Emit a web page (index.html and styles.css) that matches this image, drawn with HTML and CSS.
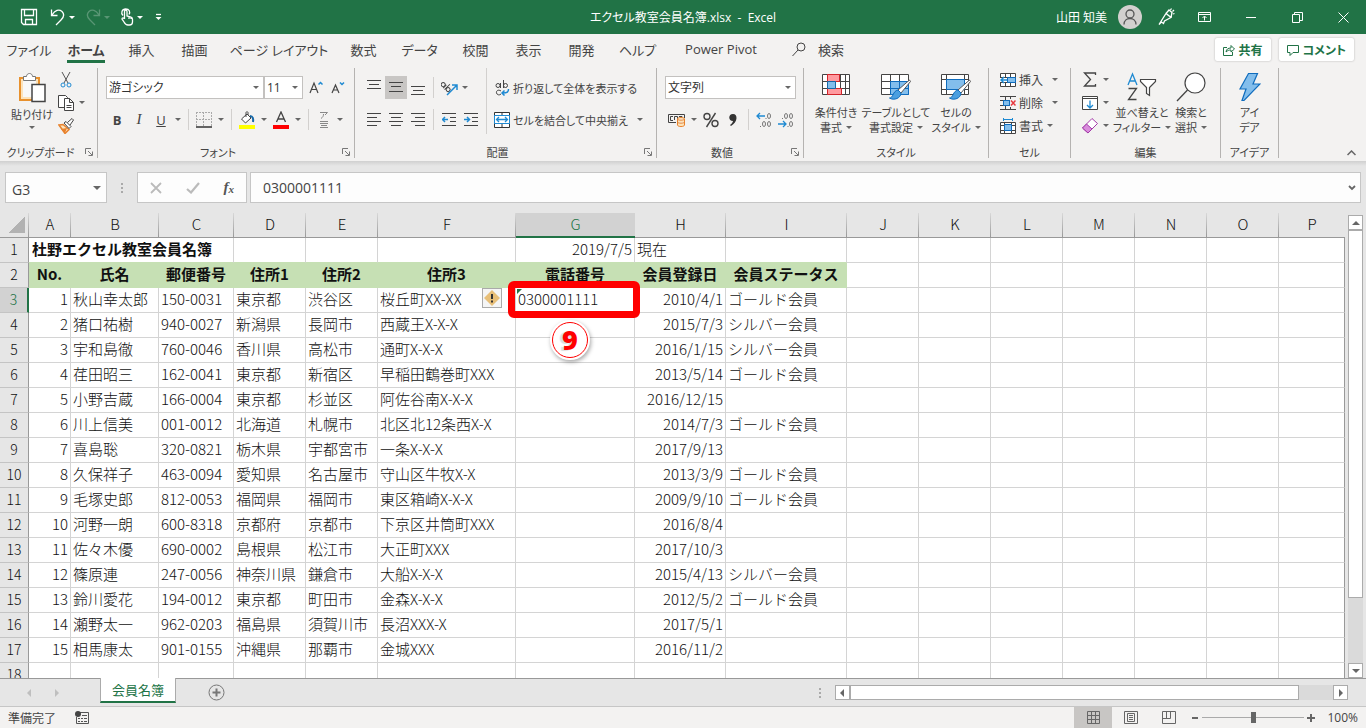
FILE: index.html
```html
<!DOCTYPE html>
<html lang="ja">
<head>
    <meta charset="UTF-8">
    <meta name="viewport" content="width=device-width, initial-scale=1.0">
    <title>エクセル教室会員名簿.xlsx - Excel</title>
    <link rel="stylesheet" href="styles.css">
</head>
<body>
    <header class="titlebar">
        <div class="quick-access">
            <button class="qa-btn" aria-label="上書き保存"><svg width="18" height="18" viewBox="0 0 18 18"><path d="M1.5 1.5h15v15h-13l-2-2zM4.500 1.500v6h9v-6M5.500 16.500v-5h7v5"/></svg></button>
            <button class="qa-btn qa-undo" aria-label="元に戻す"><svg width="16" height="18" viewBox="0 0 16 18"><path d="M1.500 1.500v6h6M2 7C5 2 9 1 12 3.500c3 3 1.500 6-1 8.500L6 17"/></svg><i class="caret"></i></button>
            <button class="qa-btn qa-redo" aria-label="やり直し"><svg width="16" height="18" viewBox="0 0 16 18"><path d="M14.500 1.500v6h-6M14 7C11 2 7 1 4 3.500c-3 3-1.500 6 1 8.500l5 5"/></svg><i class="caret"></i></button>
            <button class="qa-btn qa-touch" aria-label="タッチ/マウス モード"><svg width="14" height="18" viewBox="0 0 14 18"><path d="M4.500 11V3.500c0-2 2.500-2 2.500 0V8l4 1c1.500.5 1.500 1 1.500 2.500V14c0 2-1 3-3 3H8c-2 0-3-1-4-3l-2-3c0-1.500 1.500-1.500 2.500 0M9 8.500V11M11 9v2M3 7.500C.5 5 2 1 5.700 1S10.500 4 9 6.500"/></svg><i class="caret"></i></button>
            <button class="qa-btn" aria-label="クイック アクセス ツール バーのユーザー設定"><svg width="7" height="8" viewBox="0 0 7 8"><path d="M1 1.500h5"/><path class="solid" d="M.5 4h6l-3 3z"/></svg></button>
        </div>
        <div class="doc-title">エクセル教室会員名簿.xlsx&nbsp; -&nbsp; Excel</div>
        <div class="window-tools">
            <span class="user-name">山田 知美</span>
            <span class="avatar"><svg width="24" height="24" viewBox="0 0 24 24"><circle cx="12" cy="9" r="4"/><path d="M6 19.500c0-8 12-8 12 0"/></svg></span>
            <button class="pen-btn" aria-label="近日公開の機能"><svg width="17" height="18" viewBox="0 0 17 18"><path d="M1 16.500L8 5.500l5 4L6.500 13l-1 2.500L3.500 14zM8 5.500l3-3.500 3 2.500-1 5M12.500 2L13.500.5M14.500 3.500L16 2M15 6l1.500-.5"/></svg></button>
            <button class="win-btn" aria-label="リボンの表示オプション"><svg width="14" height="12" viewBox="0 0 14 12"><path d="M.5 1.500h12v9H.5zM.5 3.500h12M6.500 9.500v-4M4.500 7l2-2 2 2"/></svg></button>
            <button class="win-btn" aria-label="最小化"><svg width="11" height="11" viewBox="0 0 11 11"><path d="M0 5.500h10"/></svg></button>
            <button class="win-btn" aria-label="元に戻す (縮小)"><svg width="11" height="11" viewBox="0 0 11 11"><path d="M.5 2.500h7v8h-7zM2.500 2.500v-2h8v8h-3"/></svg></button>
            <button class="win-btn" aria-label="閉じる"><svg width="11" height="11" viewBox="0 0 11 11"><path d="M.5.5l10 10M10.500.5l-10 10"/></svg></button>
        </div>
    </header>

    <nav class="tabs">
        <button class="tab tab-file">ファイル</button>
        <button class="tab tab-home active"><span>ホーム</span></button>
        <button class="tab">挿入</button>
        <button class="tab">描画</button>
        <button class="tab tab-layout">ページ レイアウト</button>
        <button class="tab">数式</button>
        <button class="tab tab-kana">データ</button>
        <button class="tab">校閲</button>
        <button class="tab">表示</button>
        <button class="tab">開発</button>
        <button class="tab tab-kana">ヘルプ</button>
        <button class="tab tab-pivot">Power Pivot</button>
        <button class="tab tab-search"><svg width="14" height="15" viewBox="0 0 14 15"><circle cx="9" cy="5" r="4"/><path d="M6 8l-5.500 6"/></svg>検索</button>
        <div class="tab-actions">
            <button class="action-btn"><svg width="12" height="12" viewBox="0 0 12 12"><path d="M4 3.500H.5v8h9V8M3 8c.5-3 2-4 5-4V1.500L11.500 5 8 8V6C6 6 4.500 6.500 3 8z"/></svg>共有</button>
            <button class="action-btn"><svg width="12" height="12" viewBox="0 0 12 12"><path d="M.5 1.500h11v7H6l-3 3v-3H.5z"/></svg>コメント</button>
        </div>
    </nav>

    <section class="ribbon">
        <div class="group g-clip">
            <div class="group-body">
                <button class="big-btn paste-btn">
                    <svg width="28" height="32" viewBox="0 0 28 32"><path fill="#fce3bb" stroke="#e8912d" stroke-width="2" d="M2 6h19v22H2z"/><path fill="#f8f8f8" d="M5 9h13v16H5z"/><path fill="#fff" stroke="#777" d="M5.500 8.500v-4h3c0-4 6-4 6 0h3v4z"/><path fill="#fff" stroke="#444" stroke-width="1.500" d="M14 12.500h13v17H14z"/></svg>
                    <span>貼り付け</span><i class="caret"></i>
                </button>
                <div class="stack">
                    <button class="row-btn" aria-label="切り取り"><svg width="16" height="16" viewBox="0 0 16 16"><path stroke="#555" d="M4 0l6 11M12 0L6 11"/><circle cx="5" cy="13" r="2" stroke="#1f8ad2"/><circle cx="11" cy="13" r="2" stroke="#1f8ad2"/></svg></button>
                    <button class="row-btn" aria-label="コピー"><svg width="16" height="16" viewBox="0 0 16 16"><path fill="#fff" stroke="#444" d="M.5.500h7l2 2v10h-9z"/><path fill="#fff" stroke="#444" d="M6.500 3.500h5l4 4v8h-9zM11.500 3.500v4h4M8.500 10.500h5M8.500 12.500h5"/></svg><i class="caret"></i></button>
                    <button class="row-btn" aria-label="書式のコピー/貼り付け"><svg width="16" height="16" viewBox="0 0 16 16"><path fill="#fce3bb" stroke="#e8822d" stroke-width="1.500" d="M1 7l4-.500 6 5-4 4z"/><path fill="#e8822d" d="M3 11l6-1-2 5z"/><path fill="#fff" stroke="#444" d="M6 5l2-1.500 5 5L11 10.500zM9.500 4.500L14 .5 15.500 2 12 7"/></svg></button>
                </div>
            </div>
            <div class="group-label"><span>クリップボード</span><button class="launcher" aria-label="クリップボードの詳細"><svg width="8" height="8" viewBox="0 0 8 8"><path d="M.5 6V.5H6M3 3l4 4M7.500 3.500v4h-4"/></svg></button></div>
        </div>

        <div class="group g-font">
            <div class="group-body lines">
                <div class="line">
                    <span class="select-wrap font-name"><select aria-label="フォント"><option>游ゴシック</option></select></span>
                    <span class="select-wrap font-size"><select aria-label="フォント サイズ"><option>11</option></select></span>
                    <button class="icon-btn" aria-label="フォント サイズの拡大"><svg width="15" height="14" viewBox="0 0 15 14"><path stroke="#444" stroke-width="1.200" d="M1 12L5 2l4 10M2.500 8.500h5"/><path stroke="#1f8ad2" stroke-width="1.500" d="M9.500 3.500l2-2 2 2"/></svg></button>
                    <button class="icon-btn" aria-label="フォント サイズの縮小"><svg width="15" height="14" viewBox="0 0 15 14"><path stroke="#444" stroke-width="1.200" d="M1 12l3.500-8L8 12M2.300 9h4.500"/><path stroke="#1f8ad2" stroke-width="1.500" d="M9 1.500l2 2 2-2"/></svg></button>
                </div>
                <div class="line">
                    <button class="icon-btn letter bold">B</button>
                    <button class="icon-btn letter italic">I</button>
                    <button class="icon-btn letter underline">U</button>
                    <i class="caret"></i>
                    <i class="sep"></i>
                    <button class="menu-btn" aria-label="罫線"><svg width="16" height="16" viewBox="0 0 16 16"><path stroke="#aaa" stroke-dasharray="2 1" d="M.5 0v14M15.500 0v14M0 .5h16M0 7.500h16M7.500 0v14"/><path stroke="#333" stroke-width="1.500" d="M0 15h16"/></svg><i class="caret"></i></button>
                    <i class="sep"></i>
                    <button class="menu-btn" aria-label="塗りつぶしの色"><svg width="16" height="18" viewBox="0 0 16 18"><path fill="#fff" stroke="#444" d="M2.500 8L8 3l4 4-5.500 5zM7 6V1.500c0-1 2-1 2 0V4"/><path stroke="#1668a8" stroke-width="2" d="M11 5c3 0 3.500 3 3 6"/><path fill="#ff0" d="M0 14h16v4H0z"/></svg><i class="caret"></i></button>
                    <button class="menu-btn" aria-label="フォントの色"><svg width="16" height="18" viewBox="0 0 16 18"><path stroke="#444" stroke-width="1.300" d="M3.500 11L8 1l4.500 10M5 8h6"/><path fill="#f00" d="M0 14h16v4H0z"/></svg><i class="caret"></i></button>
                    <i class="sep"></i>
                    <button class="menu-btn phonetic" aria-label="ふりがなの表示/非表示"><svg width="10" height="17" viewBox="0 0 10 17"><path stroke="#888" d="M1 1.500h7.500L6 4M4.500 3c0 2-.5 3-2.500 4.500M1 10.500h8M1 12.500h8M2 14.500h6M1 16.500h8"/></svg><i class="caret"></i></button>
                </div>
            </div>
            <div class="group-label"><span>フォント</span><button class="launcher" aria-label="フォントの設定"><svg width="8" height="8" viewBox="0 0 8 8"><path d="M.5 6V.5H6M3 3l4 4M7.500 3.500v4h-4"/></svg></button></div>
        </div>

        <div class="group g-align">
            <div class="group-body">
                <div class="lines">
                    <div class="line">
                        <button class="align-btn" aria-label="上揃え"><svg width="14" height="15" viewBox="0 0 14 15"><path d="M0 .500h14M2 4.500h10M0 8.500h14"/></svg></button>
                        <button class="align-btn pressed" aria-label="上下中央揃え"><svg width="14" height="15" viewBox="0 0 14 15"><path d="M0 2.500h14M2 6.500h10M0 11.500h14"/></svg></button>
                        <button class="align-btn" aria-label="下揃え"><svg width="14" height="15" viewBox="0 0 14 15"><path d="M0 6.500h14M2 10.500h10M0 14.500h14"/></svg></button>
                        <i class="sep"></i>
                        <button class="menu-btn" aria-label="方向"><svg width="17" height="16" viewBox="0 0 17 16"><g stroke="#444" transform="rotate(45 5 6)"><circle cx="2" cy="7" r="2"/><path d="M4.500 5v4.500M6.500 2v7.500"/><circle cx="9" cy="7" r="2"/></g><path stroke="#1f8ad2" stroke-width="1.500" d="M6 15L15.500 5.500M11 5h5v5"/></svg><i class="caret"></i></button>
                    </div>
                    <div class="line">
                        <button class="align-btn" aria-label="左揃え"><svg width="14" height="14" viewBox="0 0 14 14"><path d="M0 .5h14M0 4.500h10M0 8.500h14M0 12.500h10"/></svg></button>
                        <button class="align-btn" aria-label="中央揃え"><svg width="14" height="14" viewBox="0 0 14 14"><path d="M0 .5h14M2 4.500h10M0 8.500h14M2 12.500h10"/></svg></button>
                        <button class="align-btn" aria-label="右揃え"><svg width="14" height="14" viewBox="0 0 14 14"><path d="M0 .5h14M4 4.500h10M0 8.500h14M4 12.500h10"/></svg></button>
                        <i class="sep"></i>
                        <button class="align-btn" aria-label="インデントを減らす"><svg width="14" height="14" viewBox="0 0 14 14"><path d="M0 .5h14M8 4.500h6M8 8.500h6M0 12.500h14"/><path class="blue" d="M0 6.500h6M3 4L.500 6.500 3 9"/></svg></button>
                        <button class="align-btn" aria-label="インデントを増やす"><svg width="14" height="14" viewBox="0 0 14 14"><path d="M0 .5h14M8 4.500h6M8 8.500h6M0 12.500h14"/><path class="blue" d="M0 6.500h6M3 4l2.500 2.500L3 9"/></svg></button>
                    </div>
                </div>
                <div class="lines wrap-lines">
                    <button class="line text-btn"><svg width="16" height="16" viewBox="0 0 16 16"><g stroke="#444"><circle cx="4" cy="5.500" r="2"/><path d="M6.500 3v5M9.500 0v8M7 11c-3-2-5 0-4.500 2S5.500 15.500 7 14"/><circle cx="11.500" cy="5.500" r="2"/></g><path stroke="#1f8ad2" stroke-width="1.500" d="M14.500 9c0 3-1 4-6 4M10.500 10.500L8 13l2.500 2.500"/></svg><span>折り返して全体を表示する</span></button>
                    <button class="line text-btn"><svg width="16" height="16" viewBox="0 0 16 16"><path fill="#fff" stroke="#333" d="M.5.500h15v15H.5zM8 0v4M8 12v4"/><path fill="#fff" stroke="#1f8ad2" d="M.500 3.500h15v8H.5z"/><path stroke="#1f8ad2" stroke-width="1.300" d="M3 7.500h10M5 5L2.500 7.500 5 10M11 5l2.500 2.500L11 10"/></svg><span>セルを結合して中央揃え</span><i class="caret"></i></button>
                </div>
            </div>
            <div class="group-label"><span>配置</span><button class="launcher" aria-label="配置の設定"><svg width="8" height="8" viewBox="0 0 8 8"><path d="M.5 6V.5H6M3 3l4 4M7.500 3.500v4h-4"/></svg></button></div>
        </div>

        <div class="group g-number">
            <div class="group-body lines">
                <div class="line">
                    <span class="select-wrap number-format"><select aria-label="数値の書式"><option>文字列</option></select></span>
                </div>
                <div class="line">
                    <button class="menu-btn currency" aria-label="通貨表示形式"><svg width="17" height="14" viewBox="0 0 17 14"><path stroke="#444" d="M16.500 5V1.500H.5v8H8M5 3.500H2.500v4H5M6.500 7V3.500h3v3M11 3.500h3v1"/><path fill="#fce3bb" stroke="#e8822d" d="M9.500 6c0-2 7-2 7 0v6c0 2-7 2-7 0zM9.500 6c0 1.500 7 1.500 7 0M9.500 9c0 1.500 7 1.500 7 0"/></svg><i class="caret"></i></button>
                    <button class="icon-btn" aria-label="パーセント スタイル"><svg width="16" height="16" viewBox="0 0 16 16"><g stroke="#444" stroke-width="1.400"><circle cx="4" cy="4.500" r="3"/><circle cx="12" cy="11.500" r="3"/><path d="M12.500 1L3.500 15"/></g></svg></button>
                    <button class="icon-btn" aria-label="桁区切りスタイル"><svg width="10" height="14" viewBox="0 0 10 14"><path fill="#333" d="M5 1c5 0 5 8-2 12l-1-1c2-1.500 3-3 3-4C0 8 0 1 5 1z"/></svg></button>
                    <i class="sep"></i>
                    <button class="icon-btn decimal" aria-label="小数点以下の表示桁数を増やす"><svg width="16" height="16" viewBox="0 0 16 16"><g stroke="#777"><ellipse cx="13" cy="4" rx="1.500" ry="2.500"/><ellipse cx="8" cy="12" rx="1.500" ry="2.500"/><ellipse cx="13" cy="12" rx="1.500" ry="2.500"/><path d="M9.500 6.500h1M4 14.500h1"/></g><path stroke="#1f8ad2" stroke-width="1.300" d="M1 4h8M4 1L1 4l3 3"/></svg></button>
                    <button class="icon-btn decimal" aria-label="小数点以下の表示桁数を減らす"><svg width="16" height="16" viewBox="0 0 16 16"><g stroke="#777"><ellipse cx="8" cy="4" rx="1.500" ry="2.500"/><ellipse cx="13" cy="4" rx="1.500" ry="2.500"/><ellipse cx="13" cy="12" rx="1.500" ry="2.500"/><path d="M4 6.500h1M9.500 14.500h1"/></g><path stroke="#1f8ad2" stroke-width="1.300" d="M0 12h8M5 9l3 3-3 3"/></svg></button>
                </div>
            </div>
            <div class="group-label"><span>数値</span><button class="launcher" aria-label="表示形式の設定"><svg width="8" height="8" viewBox="0 0 8 8"><path d="M.5 6V.5H6M3 3l4 4M7.500 3.500v4h-4"/></svg></button></div>
        </div>

        <div class="group g-style">
            <div class="group-body">
                <button class="big-btn"><svg width="30" height="28" viewBox="0 0 30 28"><path fill="#fff" stroke="#444" d="M1.500 2.500h27v20h-27zM1 9.500h28M1 16.500h28M6.500 2v21M19.500 2v21M24.500 2v21"/><path fill="#ff9a9f" stroke="#d3242b" d="M6.500 2.500h12v7h-12zM6.500 16.500h14v6h-14z"/><path fill="#83beec" stroke="#1668a8" d="M6.500 9.500h8v7h-8z"/></svg><span>条件付き<br>書式<i class="caret"></i></span></button>
                <button class="big-btn"><svg width="30" height="28" viewBox="0 0 30 28"><path fill="#fff" stroke="#444" d="M.5 2.500h27v20H.5zM0 9.500h28M0 16.500h28M9.500 2v21M18.500 2v21"/><path fill="#83beec" stroke="#0f6cbd" d="M9.500 9.500h18v13h-18zM9.500 16.500h18M18.500 9.500v13"/><path fill="#fff" stroke="#555" d="M17 18L28.500 8l1 1.500L20 21z"/><path fill="#4a9fe0" stroke="#0f6cbd" d="M8.500 26c4 0 3-7 8.500-8l3 3c0 5-7 8-11.500 5z"/></svg><span>テーブルとして<br>書式設定<i class="caret"></i></span></button>
                <button class="big-btn"><svg width="30" height="28" viewBox="0 0 30 28"><path fill="#fff" stroke="#444" d="M.5 2.500h27v20H.5zM0 7.500h28M0 17.500h28M5.500 2v21M23.500 2v21"/><path fill="#83beec" stroke="#0f6cbd" d="M5.500 7.500h18v10h-18z"/><path fill="#fff" stroke="#555" d="M17 18L28.500 8l1 1.500L20 21z"/><path fill="#4a9fe0" stroke="#0f6cbd" d="M8.500 26c4 0 3-7 8.500-8l3 3c0 5-7 8-11.500 5z"/></svg><span>セルの<br>スタイル<i class="caret"></i></span></button>
            </div>
            <div class="group-label"><span>スタイル</span></div>
        </div>

        <div class="group g-cells">
            <div class="group-body">
                <div class="stack">
                    <button class="row-btn"><svg width="16" height="14" viewBox="0 0 16 14"><path fill="#fff" stroke="#444" d="M.5.500h15v13H.5zM.5 4.500h15M.5 9.500h15M5.500.5v13M10.500.5v13"/><path fill="#83beec" stroke="#0f6cbd" d="M7.500 4.500h8v5h-8z"/><path fill="#fff" d="M0 5h7v4H0z"/><path stroke="#1f8ad2" stroke-width="1.500" d="M1 7h6M4 4L1 7l3 3"/></svg><span>挿入</span><i class="caret"></i></button>
                    <button class="row-btn"><svg width="16" height="14" viewBox="0 0 16 14"><path fill="#fff" stroke="#444" d="M0 .500h16M5.500.5v4M10.500.5v4M0 4.500h16M0 9.500h16M0 13.500h16M5.500 9.500v4M10.500 9.500v4"/><path fill="#83beec" stroke="#0f6cbd" d="M3.500 4.500h6v5h-6z"/><path fill="#f3f2f1" d="M10 3h6v8h-6z"/><path stroke="#e8383d" stroke-width="1.500" d="M11 4.500l4.500 5M15.500 4.500l-4.500 5"/></svg><span>削除</span><i class="caret"></i></button>
                    <button class="row-btn near"><svg width="16" height="16" viewBox="0 0 16 16"><path fill="#fff" stroke="#444" d="M.5 4.500h15v11H.5zM.5 7.500h15M.5 12.500h15M4.500 4.500v11M11.500 4.500v11"/><path fill="#83beec" stroke="#0f6cbd" d="M4.500 6.500h7v6h-7z"/><path stroke="#1f8ad2" d="M3.500 1.500h9M3.500 0v3M12.500 0v3"/></svg><span>書式</span><i class="caret"></i></button>
                </div>
            </div>
            <div class="group-label"><span>セル</span></div>
        </div>

        <div class="group g-edit">
            <div class="group-body">
                <div class="stack">
                    <button class="row-btn" aria-label="合計"><svg width="16" height="15" viewBox="0 0 16 15"><path stroke="#444" stroke-width="1.300" d="M13.500 3V1H2.500l6 6.500-6 6.500h11v-2"/></svg><i class="caret"></i></button>
                    <button class="row-btn" aria-label="フィル"><svg width="16" height="14" viewBox="0 0 16 14"><path fill="#fff" stroke="#444" d="M.5.500h15v13H.5zM0 2.500h16"/><path stroke="#1f8ad2" stroke-width="1.300" d="M8 4.500V12M5 9l3 3 3-3"/></svg><i class="caret"></i></button>
                    <button class="row-btn" aria-label="クリア"><svg width="16" height="16" viewBox="0 0 16 16"><path fill="#fff" stroke="#a33ba8" d="M.5 10L10 .5l5.500 5L6 15z"/><path fill="#d98cdc" stroke="#a33ba8" d="M.500 10L4.500 6l5.500 5L6 15z"/></svg><i class="caret"></i></button>
                </div>
                <button class="big-btn sort-btn"><svg width="30" height="30" viewBox="0 0 30 30"><path stroke="#1f8ad2" stroke-width="1.300" d="M1 13L5.500 2 10 13M3 9h5"/><path stroke="#444" stroke-width="1.300" d="M1.500 16.500h8l-8 11h8"/><path fill="#fff" stroke="#444" stroke-width="1.200" d="M13.500 7.500h15v2l-6 6v8l-3-2v-6l-6-6z"/></svg><span>並べ替えと<br>フィルター<i class="caret"></i></span></button>
                <button class="big-btn find-btn"><svg width="30" height="30" viewBox="0 0 30 30"><circle fill="#fff" stroke="#444" stroke-width="1.200" cx="19" cy="11" r="10"/><path stroke="#444" stroke-width="1.300" d="M11.500 18L1 29"/></svg><span>検索と<br>選択<i class="caret"></i></span></button>
            </div>
            <div class="group-label"><span>編集</span></div>
        </div>

        <div class="group g-idea">
            <div class="group-body">
                <button class="big-btn"><svg width="22" height="30" viewBox="0 0 22 30"><path fill="#83beec" stroke="#0f6cbd" stroke-width="1.200" d="M9.500 1.500h9L14 12h7L5 28.500h-2L7 17H1z"/></svg><span>アイ<br>デア</span></button>
            </div>
            <div class="group-label"><span>アイデア</span></div>
        </div>
        <button class="collapse-btn" aria-label="リボンを折りたたむ"><svg width="9" height="6" viewBox="0 0 9 6"><path d="M.5 5l4-4 4 4"/></svg></button>
    </section>

    <section class="formula-bar">
        <div class="name-box"><input type="text" value="G3" aria-label="名前ボックス"><i class="caret"></i></div>
        <i class="dots"></i>
        <div class="formula-tools">
            <button aria-label="キャンセル"><svg width="12" height="12" viewBox="0 0 12 12"><path stroke="#bbb" stroke-width="1.800" d="M1 1l10 10M11 1L1 11"/></svg></button>
            <button aria-label="入力"><svg width="14" height="12" viewBox="0 0 14 12"><path stroke="#bbb" stroke-width="2.200" d="M1 7l4 3.500L13 1"/></svg></button>
            <button class="fx" aria-label="関数の挿入">f<sub>x</sub></button>
        </div>
        <div class="formula-input">
            <input type="text" value="0300001111" aria-label="数式バー">
            <svg width="8" height="6" viewBox="0 0 8 6"><path stroke="#666" stroke-width="1.800" d="M1 1l3 3 3-3"/></svg>
        </div>
    </section>

    <main class="sheet">
        <div class="grid-wrap">
            <table class="grid">
                <colgroup>
                    <col class="c-head"><col class="c-a"><col class="c-b"><col class="c-c"><col class="c-std"><col class="c-std"><col class="c-f"><col class="c-g"><col class="c-h"><col class="c-i">
                    <col class="c-std"><col class="c-std"><col class="c-std"><col class="c-std"><col class="c-std"><col class="c-std"><col>
                </colgroup>
                <thead>
                    <tr>
                        <th class="corner"></th><th>A</th><th>B</th><th>C</th><th>D</th><th>E</th><th>F</th><th class="selected">G</th><th>H</th><th>I</th><th>J</th><th>K</th><th>L</th><th>M</th><th>N</th><th>O</th><th>P</th>
                    </tr>
                </thead>
                <tbody id="grid-body">
                    <tr class="title-row">
                        <th>1</th><td colspan="3" class="sheet-title">杜野エクセル教室会員名簿</td><td></td><td></td><td></td><td class="num">2019/7/5</td><td>現在</td><td></td><td></td><td></td><td></td><td></td><td></td><td></td><td></td>
                    </tr>
                    <tr class="head-row">
                        <th>2</th><td>No.</td><td>氏名</td><td>郵便番号</td><td>住所1</td><td>住所2</td><td>住所3</td><td>電話番号</td><td>会員登録日</td><td>会員ステータス</td><td></td><td></td><td></td><td></td><td></td><td></td><td></td>
                    </tr>
                </tbody>
            </table>
        </div>
        <div class="vscroll">
            <button aria-label="上へ"><i class="arrow up"></i></button>
            <div class="vthumb"></div>
            <div class="vtrack"></div>
            <button aria-label="下へ"><i class="arrow down"></i></button>
        </div>
    </main>

    <section class="sheet-tabs">
        <button class="nav-arrow" aria-label="前のシート"><i class="arrow left"></i></button>
        <button class="nav-arrow" aria-label="次のシート"><i class="arrow right"></i></button>
        <button class="sheet-tab">会員名簿</button>
        <button class="add-sheet" aria-label="新しいシート"><svg width="17" height="17" viewBox="0 0 17 17"><circle cx="8.500" cy="8.500" r="7.500"/><path stroke-width="2" d="M8.500 4.500v8M4.500 8.500h8"/></svg></button>
        <i class="dots"></i>
        <div class="hscroll">
            <button aria-label="左へ"><i class="arrow left"></i></button>
            <div class="hthumb"></div>
            <div class="htrack"></div>
            <button aria-label="右へ"><i class="arrow right"></i></button>
        </div>
    </section>

    <footer class="statusbar">
        <span>準備完了</span>
        <button class="macro-btn" aria-label="マクロの記録"><svg width="14" height="13" viewBox="0 0 14 13"><path stroke="#555" d="M5 1.500h8.500v11h-12V6M3 7.500h2M6 7.500h2M9 7.500h3M3 10.500h2M6 10.500h2M9 10.500h3M7 4.500h5"/><circle fill="#444" cx="3" cy="3" r="3"/></svg></button>
        <div class="views">
            <button class="view active" aria-label="標準"><svg width="13" height="13" viewBox="0 0 13 13"><path d="M.5.500h12v12H.5zM4.500.5v12M8.500.5v12M.5 4.500h12M.5 8.500h12"/></svg></button>
            <button class="view" aria-label="ページ レイアウト"><svg width="14" height="13" viewBox="0 0 14 13"><path d="M.500.500h13v12H.5zM3.500 2.500h7v8h-7zM5 4.500h4M5 6.500h4M5 8.500h4"/></svg></button>
            <button class="view" aria-label="改ページ プレビュー"><svg width="14" height="13" viewBox="0 0 14 13"><path d="M.5.500h13v12H.5zM.5 7.500h8V.500M4.500.5v7"/></svg></button>
        </div>
        <button class="zoom-btn" aria-label="縮小"><svg width="7" height="8" viewBox="0 0 7 8"><path stroke-width="2" d="M0 4h6"/></svg></button>
        <input class="zoom-range" type="range" min="0" max="100" value="50" aria-label="ズーム">
        <button class="zoom-btn" aria-label="拡大"><svg width="8" height="8" viewBox="0 0 8 8"><path stroke-width="2" d="M0 4h8M4 0v8"/></svg></button>
        <span class="zoom-value">100%</span>
    </footer>

    <script src="script.js"></script>
</body>
</html>
```

FILE: styles.css
```css
* {
    box-sizing: border-box;
}
body {
    margin: 0;
    height: 100vh;
    display: flex;
    flex-direction: column;
    overflow: hidden;
    background: #e6e6e6;
    color: #444;
    font-family: "Open Sans", "Noto Sans CJK JP", sans-serif;
    font-size: 12px;
    font-feature-settings: "palt";
}
button, input, select {
    font: inherit;
    font-feature-settings: inherit;
    color: inherit;
    border: 0;
    padding: 0;
    margin: 0;
    background: none;
    outline: none;
}
button {
    display: flex;
    align-items: center;
    justify-content: center;
    white-space: nowrap;
}
svg {
    fill: none;
    flex: none;
}
.caret {
    flex: none;
    display: inline-block;
    border: 3px solid transparent;
    border-top-color: #666;
    border-bottom: 0;
}

/* title bar */
.titlebar {
    flex: none;
    height: 34px;
    display: grid;
    grid-template-columns: 1fr auto 1fr;
    align-items: center;
    background: #217346;
    color: #fff;
}
.titlebar svg {
    stroke: #fff;
    stroke-width: 1.3;
}
.titlebar .caret {
    border-top-color: #fff;
}
.titlebar .solid {
    fill: #fff;
    stroke: none;
}
.quick-access {
    display: flex;
    padding-left: 20px;
    gap: 12px;
}
.qa-btn {
    gap: 3px;
    height: 34px;
}
.qa-redo {
    opacity: 0.25;
}
.qa-redo, .qa-touch {
    margin-left: -2px;
}
.window-tools {
    display: flex;
    align-items: center;
    justify-content: flex-end;
}
.avatar {
    width: 24px;
    height: 24px;
    margin: 0 8px 0 11px;
    border-radius: 50%;
    background: #d2d0ce;
}
.avatar svg {
    stroke: #555;
}
.pen-btn {
    width: 32px;
}
.win-btn {
    width: 46px;
    height: 34px;
}
.win-btn svg {
    stroke-width: 1;
}

/* ribbon tabs */
.tabs {
    flex: none;
    height: 31px;
    display: flex;
    padding-left: 1px;
    background: #f3f2f1;
    font-size: 13px;
}
.tab {
    width: 53px;
    height: 30px;
}
.tab-file {
    width: 56px;
}
.tab-home {
    width: 58px;
}
.tab-layout {
    width: 116px;
}
.tab-kana {
    width: 59px;
}
.tab-pivot {
    width: 108px;
}
.tab-search {
    width: 86px;
    gap: 12px;
}
.tab-search svg {
    stroke: #444;
}
.tab.active {
    font-weight: bold;
}
.tab.active span {
    height: 27px;
    line-height: 28px;
    border-bottom: 3px solid #217346;
}
.tab-actions {
    display: flex;
    gap: 8px;
    margin: 4px 12px 0 auto;
}
.action-btn {
    height: 23px;
    padding: 0 8px;
    gap: 4px;
    border-radius: 2px;
    background: #fff;
    box-shadow: 0 0 2px #aaa;
    color: #217346;
    font-size: 12px;
    font-weight: bold;
}
.action-btn svg {
    stroke: #217346;
}

/* ribbon */
.ribbon {
    flex: none;
    height: 96px;
    display: flex;
    background: #f3f2f1;
}
.group {
    flex: none;
    display: flex;
    flex-direction: column;
    margin: 3px 0;
    border-right: 1px solid #b5b3b1;
}
.group-body {
    flex: 1;
    display: flex;
}
.group-label {
    height: 12px;
    line-height: 14px;
    font-size: 11px;
    display: flex;
}
.group-label span {
    flex: 1;
    text-align: center;
}
.launcher {
    width: 16px;
}
.launcher svg {
    stroke: #777;
}
.g-clip {
    width: 98px;
}
.g-font {
    width: 257px;
}
.g-align {
    width: 302px;
}
.g-number {
    width: 147px;
}
.g-style {
    width: 185px;
}
.g-cells {
    width: 82px;
}
.g-edit {
    width: 150px;
}
.g-idea {
    width: 58px;
}
.big-btn {
    width: 60px;
    padding-top: 4px;
    flex-direction: column;
    justify-content: flex-start;
    line-height: 15px;
    font-size: 11px;
}
.big-btn svg {
    margin-bottom: 3px;
}
.big-btn span {
    margin-top: auto;
    margin-bottom: 11px;
}
.big-btn span .caret {
    margin: 0 0 3px 4px;
}
.paste-btn {
    width: 58px;
    padding-left: 6px;
}
.paste-btn span {
    margin: 0;
}
.paste-btn .caret {
    margin-top: 4px;
}
.stack {
    display: flex;
    flex-direction: column;
}
.row-btn {
    height: 23px;
    justify-content: flex-start;
    gap: 5px;
}
.g-cells .stack {
    padding-left: 11px;
}
.g-cells .row-btn {
    gap: 3px;
}
.g-cells .row-btn .caret {
    margin-left: 6px;
}
.g-cells .near .caret {
    margin-left: 1px;
}
.g-edit .stack {
    width: 43px;
    padding-left: 11px;
}
.g-edit .sort-btn {
    width: 56px;
}
.g-edit .find-btn {
    width: 42px;
}
.g-style .group-body {
    padding-left: 2px;
}
.g-idea .big-btn {
    width: 57px;
}
.lines {
    display: flex;
    flex-direction: column;
    gap: 9px;
    padding-top: 8px;
}
.line {
    display: flex;
    align-items: center;
    height: 23px;
}
.select-wrap {
    position: relative;
    height: 23px;
    border: 1px solid #c3c1bf;
    background: #fff;
}
.select-wrap select {
    width: 100%;
    height: 21px;
    padding-left: 2px;
    appearance: none;
    color: #333;
}
.select-wrap::after {
    content: "";
    position: absolute;
    right: 4px;
    top: 9px;
    border: 3px solid transparent;
    border-top-color: #666;
    border-bottom: 0;
    pointer-events: none;
}
.g-font .group-body, .g-number .group-body {
    padding-left: 8px;
}
.font-name {
    width: 158px;
}
.font-size {
    width: 39px;
    margin-right: 2px;
}
.number-format {
    width: 131px;
}
.icon-btn {
    width: 22px;
    height: 23px;
}
.letter {
    font-size: 13px;
}
.bold {
    font-weight: bold;
}
.italic {
    font-family: "Liberation Serif", serif;
    font-style: italic;
    font-size: 15px;
}
.underline {
    text-decoration: underline;
}
.letter + .caret {
    margin-left: 3px;
}
.sep {
    flex: none;
    width: 1px;
    height: 21px;
    margin: 0 7px;
    background: #d2d0ce;
}
.menu-btn {
    gap: 6px;
    height: 23px;
}
.menu-btn + .menu-btn {
    margin-left: 6px;
}
.phonetic {
    gap: 8px;
    padding-left: 3px;
}
.currency {
    padding: 0 3px 0 3px;
}
.align-btn {
    width: 22px;
    height: 23px;
}
.align-btn svg {
    stroke: #444;
}
.align-btn .blue {
    stroke: #1f8ad2;
    stroke-width: 1.5;
}
.align-btn.pressed {
    background: #c8c6c4;
}
.g-align .lines {
    padding-left: 8px;
}
.g-align .sep {
    margin: 0 4px;
}
.g-align .line .menu-btn {
    padding-left: 3px;
    gap: 4px;
}
.g-align .wrap-lines {
    margin-left: 4px;
    border-left: 1px solid #d2d0ce;
    height: 66px;
    padding-left: 7px;
}
.text-btn {
    justify-content: flex-start;
    gap: 3px;
    font-size: 11px;
}
.text-btn .caret {
    margin-left: 6px;
}
.g-number .sep {
    margin: 0 4px;
}
.collapse-btn {
    margin: 84px 10px 0 auto;
    height: 8px;
}
.collapse-btn svg {
    stroke: #666;
    stroke-width: 1.5;
}

/* formula bar */
.formula-bar {
    flex: none;
    height: 52px;
    padding: 11px 5px 9px;
    display: flex;
    background: linear-gradient(#d0d0d0, #e6e6e6 5px);
    font-size: 14px;
}
.name-box, .formula-tools, .formula-input {
    display: flex;
    align-items: center;
    height: 31px;
    border: 1px solid #c6c6c6;
    background: #fdfdfd;
}
.name-box {
    width: 102px;
    padding: 0 5px 0 6px;
}
.name-box input {
    flex: 1;
    min-width: 0;
    padding-top: 3px;
}
.name-box .caret {
    border-width: 4px 4px 0;
}
.dots {
    flex: none;
    align-self: center;
    width: 2px;
    height: 10px;
    background: repeating-linear-gradient(#aaa 0 2px, transparent 2px 4px);
}
.formula-bar .dots {
    margin: 0 14px;
}
.formula-tools {
    width: 110px;
    justify-content: space-around;
    margin-right: 3px;
}
.formula-tools .fx {
    display: block;
    font: italic bold 15px "Liberation Serif", serif;
    color: #555;
}
.fx sub {
    font-size: 11px;
    vertical-align: -1px;
}
.formula-input {
    flex: 1;
    padding: 0 4px 0 12px;
}
.formula-input input {
    flex: 1;
}

/* worksheet */
.sheet {
    flex: 1;
    min-height: 0;
    display: flex;
}
.grid-wrap {
    flex: 1;
    min-width: 0;
    overflow: hidden;
}
.grid {
    width: 100%;
    table-layout: fixed;
    border-collapse: separate;
    border-spacing: 0;
    font-family: "Noto Sans CJK JP", sans-serif;
    font-feature-settings: normal;
    font-size: 15px;
    font-weight: 300;
    line-height: 22px;
    color: #111;
}
.c-head {
    width: 29px;
}
.c-a {
    width: 42px;
}
.c-b {
    width: 88px;
}
.c-c {
    width: 75px;
}
.c-std {
    width: 72px;
}
.c-f {
    width: 138px;
}
.c-g {
    width: 119px;
}
.c-h {
    width: 91px;
}
.c-i {
    width: 121px;
}
.grid th, .grid td {
    height: 25px;
    padding: 0 2px 2px;
    white-space: nowrap;
    font-weight: 300;
}
.grid td {
    position: relative;
    background: #fff;
    border-right: 1px solid #d4d4d4;
    border-bottom: 1px solid #d4d4d4;
}
.grid td:last-child {
    border-right-color: #999;
}
.grid thead th {
    border-bottom: 1px solid #999;
    background: linear-gradient(#d8d8d8, #999) right / 1px 100% no-repeat #e6e6e6;
}
.grid thead th:last-child {
    background: #e6e6e6;
}
.grid thead .corner {
    background: linear-gradient(135deg, transparent 50%, #b2b2b2 50%) 8px 3px / 17px 17px no-repeat, linear-gradient(#d8d8d8, #999) right / 1px 100% no-repeat;
}
.grid thead .selected {
    background: #d2d2d2;
    padding-bottom: 1px;
    border-bottom: 2px solid #217346;
    color: #217346;
}
.grid tbody th {
    background: #e6e6e6;
    border-right: 1px solid #999;
    border-bottom: 1px solid #c4c4c4;
    font-size: 14px;
}
.grid tbody th.selected {
    background: #d2d2d2;
    border-right: 2px solid #217346;
    color: #217346;
}
.grid .num {
    text-align: right;
}
.grid .sheet-title {
    padding-left: 3px;
    font-weight: bold;
}
.title-row td:nth-child(-n+8) {
    border-bottom-color: #c6e0b4;
}
.grid .head-row td:nth-child(-n+10) {
    background: #c6e0b4;
    border-color: #c6e0b4;
    font-weight: bold;
    text-align: center;
}
.highlight {
    position: absolute;
    inset: -7px -6px -6px -8px;
    border: 7px solid #f00;
    border-radius: 6px;
    z-index: 1;
}
.error-mark {
    position: absolute;
    top: 1px;
    left: 1px;
    border-top: 5px solid #217346;
    border-right: 5px solid transparent;
}
.step {
    position: absolute;
    top: 32px;
    left: 34px;
    width: 40px;
    height: 40px;
    display: flex;
    align-items: center;
    justify-content: center;
    border: 2px solid #fff;
    border-radius: 50%;
    background: #fff;
    box-shadow: 1px 2px 4px rgba(0, 0, 0, 0.35);
    color: #f00;
    font-family: "Open Sans", sans-serif;
    font-size: 27px;
    font-weight: 800;
    text-shadow: -3px 1px 1px #ddd;
    z-index: 2;
}
.step::before {
    content: "";
    position: absolute;
    inset: 0;
    border: 1px solid #f00;
    border-radius: 50%;
}
.warn {
    position: absolute;
    top: 0;
    right: 13px;
    width: 20px;
    height: 20px;
    border: 1px solid #aaa;
    background: #f5f5f5;
}

/* scrollbars */
.arrow {
    border: 4px solid transparent;
}
.arrow.up {
    border-bottom-color: #666;
    border-top: 0;
}
.arrow.down {
    border-top-color: #666;
    border-bottom: 0;
}
.arrow.left {
    border-right-color: #666;
    border-left: 0;
}
.arrow.right {
    border-left-color: #666;
    border-right: 0;
}
.vscroll {
    flex: none;
    width: 15px;
    margin: 2px 3px 0;
    display: flex;
    flex-direction: column;
}
.vscroll button, .hscroll button, .vthumb, .hthumb {
    border: 1px solid #ababab;
    background: #fff;
}
.vscroll button, .hscroll button {
    flex: none;
    width: 15px;
    height: 15px;
}
.vthumb {
    flex: 369;
}
.vtrack {
    flex: 66;
    background: #dadada;
}
.hscroll {
    flex: none;
    width: 38%;
    height: 15px;
    margin: 0 18px 0 14px;
    display: flex;
}
.hthumb {
    flex: 447;
}
.htrack {
    flex: 34;
    background: #dadada;
}

/* sheet tabs */
.sheet-tabs {
    flex: none;
    height: 28px;
    display: flex;
    align-items: center;
    padding-left: 15px;
    border-top: 1px solid #999;
}
.nav-arrow {
    width: 28px;
}
.nav-arrow .arrow {
    opacity: 0.3;
}
.sheet-tab {
    align-self: flex-start;
    width: 76px;
    height: 25px;
    margin: -1px 32px 0 29px;
    background: #fff;
    border: 1px solid #ababab;
    border-top: 0;
    border-bottom: 2px solid #217346;
    color: #217346;
    font-size: 13px;
}
.add-sheet svg {
    stroke: #777;
}
.sheet-tabs .dots {
    margin-left: auto;
}

/* status bar */
.statusbar {
    flex: none;
    height: 22px;
    display: flex;
    align-items: center;
    padding: 0 8px;
    border-top: 1px solid #c6c6c6;
    background: #f3f2f1;
}
.macro-btn {
    margin-left: 19px;
}
.views {
    display: flex;
    margin-left: auto;
}
.view {
    width: 38px;
    height: 21px;
}
.view.active {
    background: #c8c6c4;
}
.view svg, .zoom-btn svg {
    stroke: #666;
}
.zoom-btn {
    width: 14px;
}
.zoom-range {
    width: 102px;
    height: 12px;
    appearance: none;
    background: linear-gradient(#aaa, #aaa) center / 100% 1px no-repeat;
}
.zoom-range::-webkit-slider-thumb {
    appearance: none;
    width: 5px;
    height: 11px;
    background: #666;
}
.zoom-value {
    width: 40px;
    text-align: right;
}
```

FILE: script.js
```js
const members = [
    ['秋山幸太郎', '150-0031', '東京都', '渋谷区', '桜丘町XX-XX', '2010/4/1', 'ゴールド会員'],
    ['猪口祐樹', '940-0027', '新潟県', '長岡市', '西蔵王X-X-X', '2015/7/3', 'シルバー会員'],
    ['宇和島徹', '760-0046', '香川県', '高松市', '通町X-X-X', '2016/1/15', 'シルバー会員'],
    ['荏田昭三', '162-0041', '東京都', '新宿区', '早稲田鶴巻町XXX', '2013/5/14', 'ゴールド会員'],
    ['小野吉蔵', '166-0004', '東京都', '杉並区', '阿佐谷南X-X-X', '2016/12/15', ''],
    ['川上信美', '001-0012', '北海道', '札幌市', '北区北12条西X-X', '2014/7/3', 'ゴールド会員'],
    ['喜島聡', '320-0821', '栃木県', '宇都宮市', '一条X-X-X', '2017/9/13', ''],
    ['久保祥子', '463-0094', '愛知県', '名古屋市', '守山区牛牧X-X', '2013/3/9', 'ゴールド会員'],
    ['毛塚史郎', '812-0053', '福岡県', '福岡市', '東区箱崎X-X-X', '2009/9/10', 'ゴールド会員'],
    ['河野一朗', '600-8318', '京都府', '京都市', '下京区井筒町XXX', '2016/8/4', ''],
    ['佐々木優', '690-0002', '島根県', '松江市', '大正町XXX', '2017/10/3', ''],
    ['篠原連', '247-0056', '神奈川県', '鎌倉市', '大船X-X-X', '2015/4/13', 'シルバー会員'],
    ['鈴川愛花', '194-0012', '東京都', '町田市', '金森X-X-X', '2012/5/2', 'ゴールド会員'],
    ['瀬野太一', '962-0203', '福島県', '須賀川市', '長沼XXX-X', '2017/5/1', ''],
    ['相馬康太', '901-0155', '沖縄県', '那覇市', '金城XXX', '2016/11/2', '']
];

const warnIcon = `<button class="warn" aria-label="エラー チェック オプション"><svg width="16" height="16" viewBox="0 0 16 16">
    <path fill="#e8bf78" d="M8 0l8 8-8 8-8-8z"/><path stroke="#333" stroke-width="2" d="M8 4v5M8 10.500v2"/></svg></button>`;

const body = document.getElementById('grid-body');
const blanks = '<td></td>'.repeat(7);

members.forEach((m, i) => {
    const first = i === 0;
    const phone = first
        ? '0300001111<i class="error-mark"></i><span class="highlight"></span><span class="step">9</span>'
        : '';
    const row = document.createElement('tr');
    row.innerHTML = `
        <th class="${first ? 'selected' : ''}">${i + 3}</th>
        <td class="num">${i + 1}</td>
        <td>${m[0]}</td><td>${m[1]}</td><td>${m[2]}</td><td>${m[3]}</td>
        <td>${m[4]}${first ? warnIcon : ''}</td>
        <td>${phone}</td>
        <td class="num">${m[5]}</td>
        <td>${m[6]}</td>${blanks}`;
    body.appendChild(row);
});

// empty row under the list
const last = document.createElement('tr');
last.innerHTML = '<th>18</th>' + '<td></td>'.repeat(16);
body.appendChild(last);
```
